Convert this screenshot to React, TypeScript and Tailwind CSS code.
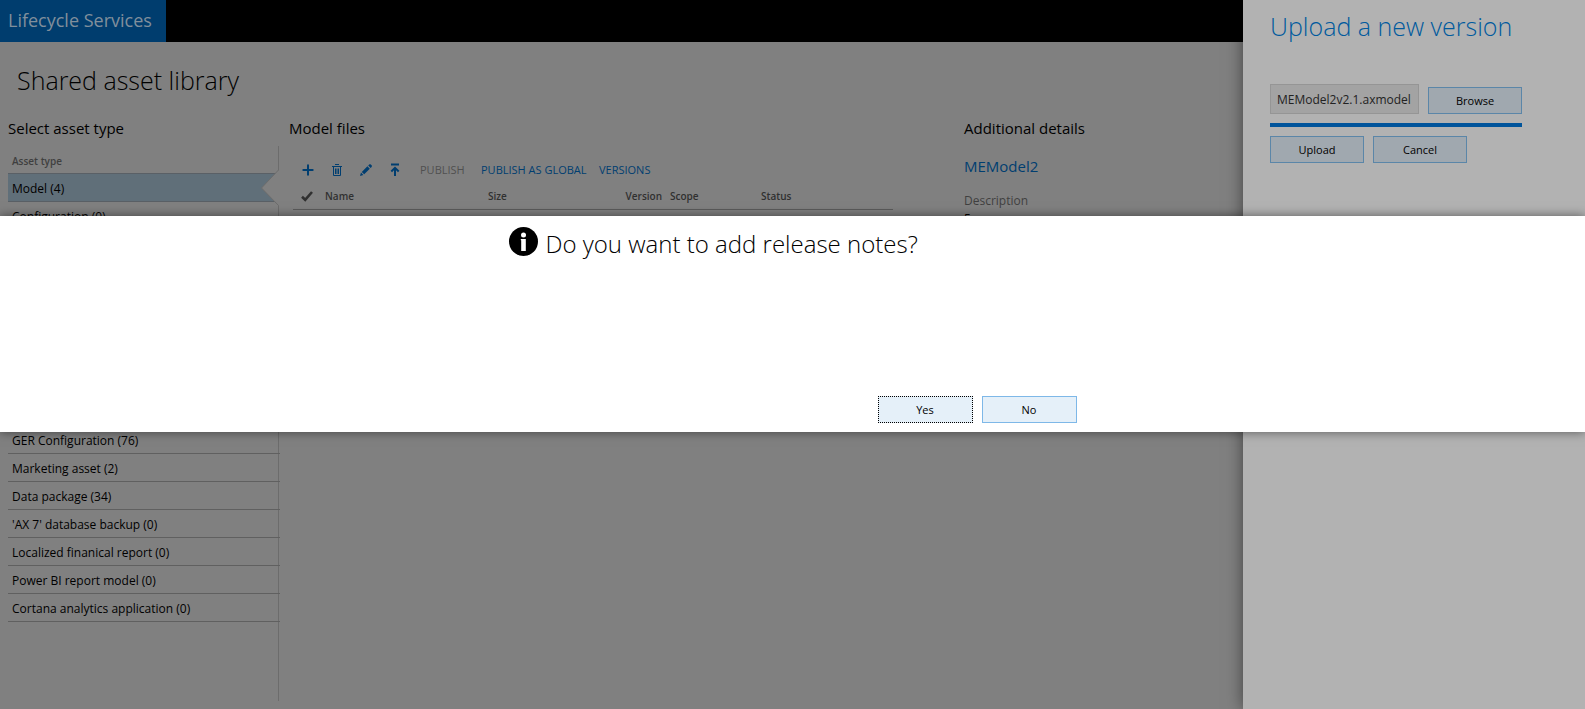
import { Plus } from "lucide-react";

const assetTypes = [
  "GER Configuration (76)",
  "Marketing asset (2)",
  "Data package (34)",
  "'AX 7' database backup (0)",
  "Localized finanical report (0)",
  "Power BI report model (0)",
  "Cortana analytics application (0)",
];

const dimButton =
  "h-[27px] w-[94px] border border-[#5b86a8] bg-[#a0a8af] pt-0.5 text-[11px] text-black";

const TrashIcon = () => (
  <svg width="14" height="14" viewBox="0 0 14 14" fill="none" stroke="#003e70">
    <path d="M2 3.5h10M5 1.5h4M3.5 4v8.5h7V4M5.5 5.5v5.5M7 5.5v5.5M8.5 5.5v5.5" />
  </svg>
);

const PencilIcon = () => (
  <svg width="14" height="14" viewBox="0 0 14 14" fill="#003e70">
    <path d="M1 13l1-3.4 2.4 2.4zM2.8 8.9l5.6-5.6 2.4 2.4-5.6 5.6zM9.2 2.5l1-1c.5-.5 1.1-.5 1.6 0l.8.8c.5.5.5 1.1 0 1.6l-1 1z" />
  </svg>
);

const UploadIcon = () => (
  <svg width="14" height="14" viewBox="0 0 14 14" fill="none" stroke="#003e70" strokeWidth="2">
    <path d="M3 1.5h8M7 13V5M3.3 8.5L7 4.8l3.7 3.7" />
  </svg>
);

const CheckIcon = () => (
  <svg width="12" height="11" viewBox="0 0 12 11" fill="none" stroke="#303030" strokeWidth="2.6">
    <path d="M1 5.8l3.2 3L11 1" />
  </svg>
);

const InfoIcon = () => (
  <svg width="29" height="29" viewBox="0 0 29 29">
    <circle cx="14.5" cy="14.5" r="14.5" fill="#000" />
    <circle cx="14.5" cy="8" r="2.5" fill="#fff" />
    <path d="M11.8 12h5v12h-4.6V13.200h-.4z" fill="#fff" />
  </svg>
);

function Header() {
  return (
    <header className="flex h-[42px] bg-black">
      <a
        href="#"
        className="flex w-[166px] items-center bg-[#003d6e] pb-0.5 pl-2 text-[18px] text-[#808f9c]"
      >
        Lifecycle Services
      </a>
    </header>
  );
}

function AssetTypes() {
  return (
    <nav className="ml-2 w-[271px] shrink-0">
      <h2 className="h-[29px] text-[15px] leading-[22px]">Select asset type</h2>
      <div className="min-h-[555px] border-r border-[#6c6c6c]">
        <table className="w-[272px] border-separate border-spacing-0 text-[12px]">
          <thead>
            <tr>
              <th className="h-[28px] border-b border-[#5a6066] px-1 pt-1 text-left text-[10px] font-semibold text-[#3f3f3f]">
                Asset type
              </th>
            </tr>
          </thead>
          <tbody>
            <tr>
              <td className="relative h-[28px] border-b border-[#5a6066] bg-[#606f79] px-1 pt-0.5">
                Model (4)
                <svg
                  className="absolute -top-1 right-0"
                  width="20"
                  height="36"
                  viewBox="0 0 20 36"
                >
                  <path d="M20 0H18.5L1.5 18l17 17.5H20z" fill="#808080" />
                  <path d="M18.5 0L1.5 18l17 17.5" fill="none" stroke="#6c6c6c" />
                </svg>
              </td>
            </tr>
            <tr>
              <td className="h-[28px] border-b border-[#606060] px-1 pt-0.5">
                Configuration (0)
              </td>
            </tr>
            <tr>
              <td className="h-[196px] border-b border-[#606060]"></td>
            </tr>
            {assetTypes.map((name) => (
              <tr key={name}>
                <td className="h-[28px] border-b border-[#606060] px-1 pt-0.5">
                  {name}
                </td>
              </tr>
            ))}
          </tbody>
        </table>
      </div>
    </nav>
  );
}

function ModelFiles() {
  return (
    <section className="ml-[10px] w-[675px] shrink-0">
      <h2 className="text-[15px] leading-[22px]">Model files</h2>
      <div className="mt-[19px] ml-[11px] flex h-[24px] items-center text-[11px] text-[#003e70]">
        <button aria-label="Add" className="w-[30px]">
          <Plus size={16} strokeWidth={3} />
        </button>
        <button aria-label="Delete" className="w-[29px]">
          <TrashIcon />
        </button>
        <button aria-label="Edit" className="w-[29px]">
          <PencilIcon />
        </button>
        <button aria-label="Upload" className="w-[32px]">
          <UploadIcon />
        </button>
        <button className="w-[61px] text-left text-[#505050]">PUBLISH</button>
        <button className="w-[118px] text-left whitespace-nowrap">
          PUBLISH AS GLOBAL
        </button>
        <button>VERSIONS</button>
      </div>
      <table className="ml-1 w-[600px] table-fixed border-separate border-spacing-0 text-left text-[10px] text-[#303030]">
        <thead>
          <tr className="*:h-[28px] *:border-b *:border-[#5c5c5c] *:pt-0.5 *:font-semibold">
            <th className="w-[28px] pl-2">
              <CheckIcon />
            </th>
            <th className="w-[163px] pl-1">Name</th>
            <th className="w-[92px] pl-1">Size</th>
            <th className="w-[90px] pr-1 text-right">Version</th>
            <th className="w-[91px] pl-1">Scope</th>
            <th className="pl-1">Status</th>
          </tr>
        </thead>
      </table>
    </section>
  );
}

function Details() {
  return (
    <section className="w-[240px]">
      <h2 className="text-[15px] leading-[22px]">Additional details</h2>
      <h3 className="mt-4 text-[15px] leading-[22px] text-[#003e70]">MEModel2</h3>
      <p className="mt-[13px] text-[12px] leading-[22px] text-[#404040]">Description</p>
      <p className="text-[12px] leading-[14px]">5</p>
    </section>
  );
}

function UploadPanel() {
  return (
    <aside className="absolute inset-y-0 right-0 w-[342px] bg-[#b2b2b2] pl-[27px] shadow-[0_0_16px_rgba(0,0,0,0.5)]">
      <h2 className="pt-2 text-[25px] leading-[36px] font-light text-[#005a9e]">
        Upload a new version
      </h2>
      <div className="mt-10 flex w-[252px] items-end justify-between">
        <input
          aria-label="File name"
          readOnly
          value="MEModel2v2.1.axmodel"
          className="h-[30px] w-[149px] border border-[#959595] bg-[#a3a3a3] px-1.5 text-[12px] text-[#222]"
        />
        <button className={dimButton}>Browse</button>
      </div>
      <div className="mt-[9px] h-1 w-[252px] bg-[#00549b]"></div>
      <div className="mt-[9px] flex gap-[9px]">
        <button className={dimButton}>Upload</button>
        <button className={dimButton}>Cancel</button>
      </div>
    </aside>
  );
}

function ReleaseNotesDialog() {
  return (
    <div
      role="dialog"
      aria-labelledby="notes-title"
      className="absolute inset-x-0 top-[216px] h-[216px] bg-white shadow-[0_0_10px_rgba(0,0,0,0.5)]"
    >
      <div className="mx-auto flex h-full w-[568px] flex-col justify-between pt-[9px] pb-[9px]">
        <div className="flex gap-2">
          <span className="pt-0.5">
            <InfoIcon />
          </span>
          <h1
            id="notes-title"
            className="text-[24px] leading-[38px] font-light text-black"
          >
            Do you want to add release notes?
          </h1>
        </div>
        <div className="flex justify-end gap-[9px]">
          <button className="h-[27px] w-[95px] border border-dotted border-black bg-[#e5f0f9] pt-0.5 text-[11px]">
            Yes
          </button>
          <button className="h-[27px] w-[95px] border border-[#7eb8e8] bg-[#e5f0f9] pt-0.5 text-[11px]">
            No
          </button>
        </div>
      </div>
    </div>
  );
}

export default function App() {
  return (
    <div className="relative min-h-screen overflow-hidden bg-[#808080] font-['Open_Sans',sans-serif] text-black">
      <Header />
      <h1 className="mt-5 ml-[17px] text-[25px] leading-[36px] font-light">
        Shared asset library
      </h1>
      <main className="mt-[19px] flex">
        <AssetTypes />
        <ModelFiles />
        <Details />
      </main>
      <UploadPanel />
      <ReleaseNotesDialog />
    </div>
  );
}
